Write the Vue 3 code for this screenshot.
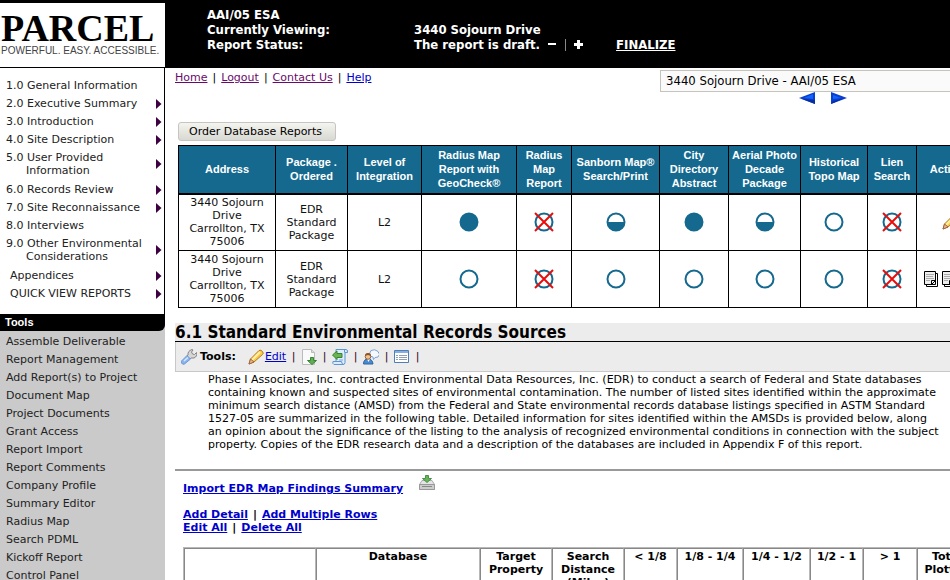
<script setup>
import { ref } from 'vue'

const sections = [
  { label: '1.0 General Information' },
  { label: '2.0 Executive Summary', more: true },
  { label: '3.0 Introduction', more: true },
  { label: '4.0 Site Description', more: true },
  { label: '5.0 User Provided', second: 'Information', more: true },
  { label: '6.0 Records Review', more: true },
  { label: '7.0 Site Reconnaissance', more: true },
  { label: '8.0 Interviews' },
  { label: '9.0 Other Environmental', second: 'Considerations', more: true },
  { label: 'Appendices', more: true, inset: true },
  { label: 'QUICK VIEW REPORTS', more: true, inset: true }
]

const tools = [
  'Assemble Deliverable', 'Report Management', 'Add Report(s) to Project', 'Document Map',
  'Project Documents', 'Grant Access', 'Report Import', 'Report Comments', 'Company Profile',
  'Summary Editor', 'Radius Map', 'Search PDML', 'Kickoff Report', 'Control Panel'
]

const orderColumns = [
  { lines: ['Address'], width: 97 },
  { lines: ['Package .', 'Ordered'], width: 72 },
  { lines: ['Level of', 'Integration'], width: 74 },
  { lines: ['Radius Map', 'Report with', 'GeoCheck®'], width: 95 },
  { lines: ['Radius', 'Map', 'Report'], width: 55 },
  { lines: ['Sanborn Map®', 'Search/Print'], width: 88 },
  { lines: ['City', 'Directory', 'Abstract'], width: 69 },
  { lines: ['Aerial Photo', 'Decade', 'Package'], width: 72 },
  { lines: ['Historical', 'Topo Map'], width: 67 },
  { lines: ['Lien', 'Search'], width: 49 },
  { lines: ['Actions'], width: 67 }
]

const orders = [
  { id: 1, marks: ['full', 'none', 'half', 'full', 'half', 'empty', 'none'], edit: true },
  { id: 2, marks: ['empty', 'none', 'empty', 'empty', 'empty', 'empty', 'none'], edit: false }
]

const findings = [
  { lines: [], width: 132 },
  { lines: ['Database'], width: 164 },
  { lines: ['Target', 'Property'], width: 72 },
  { lines: ['Search', 'Distance', '(Miles)'], width: 72 },
  { lines: ['< 1/8'], width: 53 },
  { lines: ['1/8 - 1/4'], width: 66 },
  { lines: ['1/4 - 1/2'], width: 67 },
  { lines: ['1/2 - 1'], width: 53 },
  { lines: ['> 1'], width: 54 },
  { lines: ['Total', 'Plotted'], width: 60 }
]

const summary = [
  'Phase I Associates, Inc. contracted Environmental Data Resources, Inc. (EDR) to conduct a search of Federal and State databases',
  'containing known and suspected sites of environmental contamination. The number of listed sites identified within the approximate',
  'minimum search distance (AMSD) from the Federal and State environmental records database listings specified in ASTM Standard',
  '1527-05 are summarized in the following table. Detailed information for sites identified within the AMSDs is provided below, along',
  'an opinion about the significance of the listing to the analysis of recognized environmental conditions in connection with the subject',
  'property. Copies of the EDR research data and a description of the databases are included in Appendix F of this report.'
]

const report = ref('3440 Sojourn Drive - AAI/05 ESA')
</script>

<template>
  <div class="page">
    <header class="banner">
      <div class="logo">
        <div class="logo-name">PARCEL</div>
        <div class="logo-tag">POWERFUL. EASY. ACCESSIBLE.</div>
      </div>
      <div class="status">
        <span class="wide">AAI/05 ESA</span>
        <span>Currently Viewing:</span><span>3440 Sojourn Drive</span>
        <span>Report Status:</span>
        <span class="status-line">
          The report is draft.
          <button class="step" aria-label="Previous status"><svg width="9" height="9"><path d="M0 3h8v2H0z" fill="#fff" /></svg></button>
          <i class="step-rule"></i>
          <button class="step" aria-label="Next status"><svg width="9" height="9"><path d="M0 3h3V0h3v3h3v3H6v3H3V6H0z" fill="#fff" /></svg></button>
          <a href="#" class="finalize">FINALIZE</a>
        </span>
      </div>
    </header>

    <div class="body">
      <aside class="side">
        <nav class="sections">
          <a v-for="s in sections" :key="s.label" href="#" class="section" :class="{ inset: s.inset, double: s.second }">
            <span>{{ s.label }}<span v-if="s.second" class="second">{{ s.second }}</span></span>
            <svg v-if="s.more" class="more" width="6" height="10"><path d="M0 0l5.500 5L0 10z" fill="#3d0040" /></svg>
          </a>
        </nav>
        <nav class="tools">
          <h2 class="tools-title"><span>Tools</span></h2>
          <a v-for="t in tools" :key="t" href="#" class="tool">{{ t }}</a>
        </nav>
      </aside>

      <main class="main">
        <div class="top">
          <nav class="crumbs links">
            <a href="#">Home</a><span>|</span><a href="#">Logout</a><span>|</span><a href="#">Contact Us</a><span>|</span><a href="#" class="fresh">Help</a>
          </nav>
          <div class="picker">
            <select v-model="report" aria-label="Report">
              <option>3440 Sojourn Drive - AAI/05 ESA</option>
            </select>
            <div class="pager">
              <button aria-label="Previous report"><svg width="16" height="12"><path d="M0 6L16 0v12z" fill="#0a3fd0" /><path d="M5 6l9-4v5z" fill="#1463ff" /><path d="M3 7l13 1v4z" fill="#0630a0" /></svg></button>
              <button aria-label="Next report"><svg width="16" height="12"><path d="M16 6L0 0v12z" fill="#0a3fd0" /><path d="M2 3l8 3-8 1z" fill="#1463ff" /><path d="M2 9l12-3L0 12z" fill="#0630a0" /></svg></button>
            </div>
          </div>
        </div>

        <section class="orders">
          <button class="order-button">Order Database Reports</button>
          <table class="order-table">
            <colgroup><col v-for="(c, i) in orderColumns" :key="i" :style="{ width: c.width + 'px' }" /></colgroup>
            <thead>
              <tr>
                <th v-for="(c, i) in orderColumns" :key="i"><div v-for="l in c.lines" :key="l">{{ l }}</div></th>
              </tr>
            </thead>
            <tbody>
              <tr v-for="o in orders" :key="o.id">
                <td>3440 Sojourn Drive Carrollton, TX 75006</td>
                <td>EDR Standard Package</td>
                <td>L2</td>
                <td v-for="(m, i) in o.marks" :key="i">
                  <svg class="mark" width="20" height="20" viewBox="0 0 20 20" role="img" :aria-label="m">
                    <circle cx="10" cy="10" r="8.500" :fill="m === 'full' ? '#15698f' : '#fff'" stroke="#15698f" stroke-width="2" />
                    <path v-if="m === 'half'" d="M1 10h18a9 9 0 0 1-18 0z" fill="#15698f" />
                    <path v-if="m === 'none'" d="M1 1l18 18M19 1L1 19" stroke="#e80c0c" stroke-width="2" />
                  </svg>
                </td>
                <td>
                  <svg v-if="o.edit" class="mark" width="16" height="16" viewBox="0 0 16 16">
                    <path d="M1 15l1.500-5L11 1.500q2-1 3.500 1t0 3L6 13z" fill="#f7c94b" stroke="#b57620" />
                    <path d="M4 11l8-8" stroke="#fff0a0" stroke-width="2" /><path d="M1 15l1.500-5L6 13z" fill="#edba8a" stroke="#9d6544" />
                  </svg>
                  <span v-else class="copies">
                    <svg v-for="n in 3" :key="n" width="15" height="16" viewBox="0 0 15 16">
                      <path d="M2.500 2.500h11v13h-11z" fill="#fff" stroke="#000" /><path d="M.5.500h11v13H.5z" fill="#eee" stroke="#000" />
                      <path d="M2 3.500h8M2 5.500h7M2 7.500h8M2 9.500h4" stroke="#aaa" /><path d="M7.500 13V9.500H11M8 13l3-3" stroke="#000" fill="none" />
                    </svg>
                  </span>
                </td>
              </tr>
            </tbody>
          </table>
        </section>

        <h1 class="title">6.1 Standard Environmental Records Sources</h1>
        <div class="toolbar">
          <svg width="16" height="16" viewBox="0 0 16 16">
            <path d="M7 6q-.5-4 4-5.500l1 .5-1.500 2 1 2 2 .5 2-2q1 4-2.500 5.500L10 9 9 10 6 7z" fill="#d6d6d6" stroke="#858585" />
            <path d="M6 6.500L9.500 10l-6 5q-2 1-3-1t1-3z" fill="#8ab4ee" stroke="#6f98d4" /><path d="M3 12l4-3.500" stroke="#d7e7ff" stroke-width="1.500" />
          </svg>
          <b>Tools:</b>
          <svg class="pencil" width="16" height="16" viewBox="0 0 16 16">
            <path d="M1 15l1.500-5L11 1.500q2-1 3.500 1t0 3L6 13z" fill="#f7c94b" stroke="#b57620" />
            <path d="M4 11l8-8" stroke="#fff0a0" stroke-width="2" /><path d="M1 15l1.500-5L6 13z" fill="#edba8a" stroke="#9d6544" />
          </svg>
          <a href="#" class="edit">Edit</a><i>|</i>
          <svg width="16" height="16" viewBox="0 0 16 16">
            <path d="M1.500.500h9l3 3v12h-12z" fill="#fafafa" stroke="#bbb" /><path d="M10.500.500v3h3" fill="#ddd" stroke="#bbb" />
            <path d="M9.500 8.500h3v3h3l-4.500 4-4.500-4h3z" fill="#62ae58" stroke="#348432" />
          </svg><i>|</i>
          <svg width="16" height="16" viewBox="0 0 16 16">
            <path d="M4 .5h10q2 0 1.500 3H13v10q0 2-2 2H2q-2-1-1-3h3z" fill="#dcecff" stroke="#5f94ce" /><path d="M1.500 12.500h8q0 2.500 2 3M12.500 3.500V1" fill="none" stroke="#5f94ce" />
            <path d="M.5 6L5 2v2.500h5v4H5v2z" fill="#6ab252" stroke="#36832e" /><path d="M7 11h4" stroke="#7ba8db" />
          </svg><i>|</i>
          <svg width="16" height="16" viewBox="0 0 16 16">
            <path d="M8 1.500q4-2 7 1t0 5.500l-3 .5-1.500 2-.5-2.500-3-1q-1-3 1-5.500z" fill="#f3f9ff" stroke="#7ba3ce" />
            <path d="M.5 15q0-5 4.500-5t5 5z" fill="#478bd1" stroke="#2e64a2" /><path d="M4 10l1.500 3L7 10z" fill="#fff" />
            <circle cx="5" cy="7.500" r="2.800" fill="#f2c28f" stroke="#946134" /><path d="M2 7q0-3 3-3t3 3L5 6z" fill="#8f5227" />
          </svg><i>|</i>
          <svg width="16" height="16" viewBox="0 0 16 16">
            <path d="M.5 1.500h14v12H.5z" fill="#fff" stroke="#4d7eb8" /><path d="M1 2h13v2H1z" fill="#86afe0" />
            <path d="M2 6.500h2M2 8.500h2M2 10.500h2M5 6.500h8M5 8.500h8M5 10.500h8" stroke="#8c9fb5" />
          </svg><i>|</i>
        </div>
        <p class="summary"><span v-for="l in summary" :key="l">{{ l }}</span></p>

        <section class="findings">
          <div class="import">
            <a href="#">Import EDR Map Findings Summary</a>
            <svg width="16" height="16" viewBox="0 0 16 16">
              <path d="M3 5.500h10l2.500 4v5H.5v-5z" fill="#e4e4e4" stroke="#aaa" /><path d="M.5 9.500h15v5H.5z" fill="#ccc" stroke="#999" /><path d="M3 11.500h10" stroke="#888" />
              <path d="M6.500.500h3v3h3L8 7.500 3.500 3.500h3z" fill="#67b55b" stroke="#4a904a" />
            </svg>
          </div>
          <div class="links"><a href="#">Add Detail</a><span>|</span><a href="#">Add Multiple Rows</a></div>
          <div class="links"><a href="#">Edit All</a><span>|</span><a href="#">Delete All</a></div>
          <table class="finding-table">
            <colgroup><col v-for="(c, i) in findings" :key="i" :style="{ width: c.width + 'px' }" /></colgroup>
            <thead>
              <tr>
                <th v-for="(c, i) in findings" :key="i"><div v-for="l in c.lines" :key="l">{{ l }}</div></th>
              </tr>
            </thead>
          </table>
        </section>
      </main>
    </div>
  </div>
</template>

<style>
body { margin: 0; overflow: hidden; background: #fff; }
</style>

<style scoped>
* { box-sizing: border-box; }
.page { display: flex; flex-direction: column; height: 100vh; overflow: hidden; font: 11px/13px Verdana, "DejaVu Sans", sans-serif; color: #000; }
svg { display: block; flex: none; }
button { font: inherit; }

.banner { display: flex; flex: none; height: 68px; background: #000; padding: 3px 0 1px; }
.logo { width: 165px; background: #fff; padding: 8px 0 0 1px; white-space: nowrap; overflow: hidden; }
.logo-name { font: bold 38px/34px "Liberation Serif", serif; }
.logo-tag { font: 10px/11px "Liberation Sans", sans-serif; color: #444; }
.status { display: grid; grid-template-columns: 207px 1fr; align-content: start; margin-left: 42px; padding-top: 4px; color: #fff; font: bold 13px/15px Tahoma, "DejaVu Sans Condensed", "DejaVu Sans", sans-serif; white-space: nowrap; }
.status .wide { grid-column: 1 / 3; }
.status-line { display: flex; align-items: center; line-height: 14px; }
.step { display: block; border: 0; padding: 0; background: none; margin-left: 8px; }
.step-rule { width: 1px; height: 12px; background: #888; margin-left: 8px; }
.finalize { color: #fff; margin-left: 33px; }

.body { display: flex; flex: 1; min-height: 0; }
.side { flex: none; width: 165px; display: flex; flex-direction: column; overflow: hidden; }
.sections { flex: none; border-right: 1px solid #000; padding: 9px 2px 11px 6px; }
.section { display: flex; align-items: center; justify-content: space-between; padding: 2px 0 3px; color: #222; text-decoration: none; white-space: nowrap; }
.section.double { padding-bottom: 4px; }
.section.inset { padding-left: 4px; }
.second { display: block; padding-left: 20px; }
.tools { flex: 1; background: #cacaca; min-height: 0; }
.tools-title { margin: 0 0 1px; font: bold 11px/17px "Liberation Sans", sans-serif; background: #000; color: #fff; padding-left: 5px; border-bottom-right-radius: 6px; }
.tool { display: block; padding: 3px 0 2px 6px; color: #222; text-decoration: none; white-space: nowrap; }

.main { flex: 1 0 auto; width: 820px; padding-left: 10px; }
.top { display: flex; justify-content: space-between; height: 54px; padding-top: 2px; white-space: nowrap; }
.links { display: flex; gap: 5px; }
.crumbs { padding-top: 1px; }
.crumbs a { color: #6b0a6b; }
.crumbs .fresh, .edit, .findings a { color: #0000cc; }
.picker { flex: none; width: 325px; }
.picker select { display: block; appearance: none; width: 100%; height: 22px; padding: 0 5px; border: 1px solid #c4c4bc; border-radius: 0; background: #fafafa; color: #000; font: 13px/18px Tahoma, "DejaVu Sans Condensed", "DejaVu Sans", sans-serif; }
.pager { display: flex; justify-content: center; gap: 16px; }
.pager button { border: 0; padding: 0; background: none; }

.orders { padding-left: 3px; }
.order-button { display: block; height: 19px; padding: 0 13px 0 10px; border: 1px solid #c6c6be; border-radius: 3px; background: linear-gradient(#f4f4f0, #d9d9d3); color: #000; white-space: nowrap; }
.order-table { table-layout: fixed; width: 806px; margin-top: 4px; border-collapse: collapse; text-align: center; }
.order-table th, .order-table td { border: 1px solid #000; padding: 0; height: 57px; }
.order-table th { height: 48px; background: #15698f; color: #fff; font: bold 11px/14px "Liberation Sans", sans-serif; white-space: nowrap; border-bottom-width: 2px; }
.order-table td { padding: 0 7px; color: #111; }
.mark { margin: 0 auto; }
.copies { display: flex; gap: 3px; }

.title { margin: 15px 0 0; border-bottom: 1px solid #000; background: #ececec; font: bold 17px/18px Tahoma, "DejaVu Sans Condensed", "DejaVu Sans", sans-serif; white-space: nowrap; }
.toolbar { display: flex; align-items: center; height: 30px; padding-left: 5px; border: solid #c8c8c8; border-width: 0 0 1px 1px; background: #ececec; }
.toolbar b { margin-left: 3px; }
.toolbar i { width: 15px; text-align: center; font-style: normal; color: #302; }
.pencil { margin: 0 1px 0 12px; }
.summary { margin: 0; padding: 1px 0 18px 33px; border-bottom: 2px solid #999; white-space: nowrap; }
.summary span { display: block; }
.findings { padding: 4px 0 0 8px; font-weight: bold; white-space: nowrap; }
.import { display: flex; align-items: flex-start; gap: 16px; margin-bottom: 13px; }
.import a { padding-top: 7px; }
.finding-table { table-layout: fixed; width: 795px; margin-top: 13px; border-collapse: separate; border-spacing: 0; border: 1px solid #b8b8b8; text-align: center; }
.finding-table th { height: 60px; padding: 1px 0; vertical-align: top; border: 1px solid; border-color: #888 #b8b8b8 #b8b8b8 #888; }
</style>
